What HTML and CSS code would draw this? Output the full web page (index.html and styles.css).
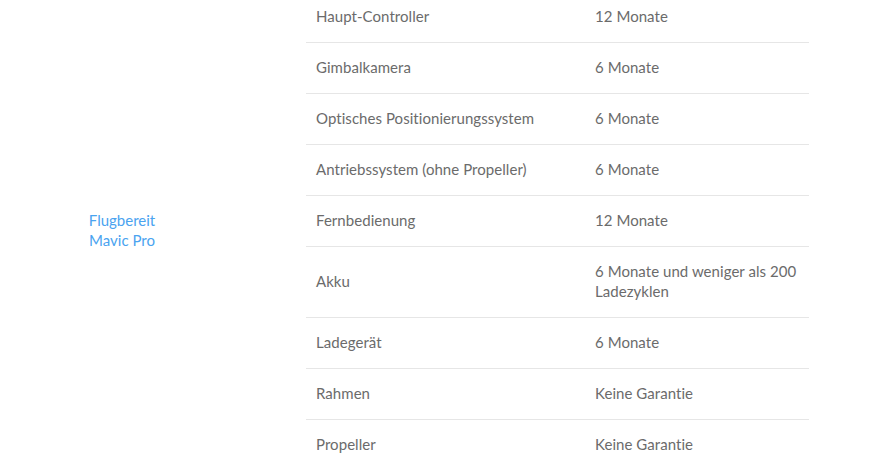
FILE: index.html
```html
<!DOCTYPE html>
<html lang="de">
<head>
<meta charset="utf-8">
<title>Garantie</title>
<link rel="stylesheet" href="styles.css">
</head>
<body>
<div class="warranty">
  <div class="product">Flugbereit<br>Mavic Pro</div>
  <div class="parts">
    <div class="row"><div class="part">Haupt-Controller</div><div class="term">12 Monate</div></div>
    <div class="row"><div class="part">Gimbalkamera</div><div class="term">6 Monate</div></div>
    <div class="row"><div class="part">Optisches Positionierungssystem</div><div class="term">6 Monate</div></div>
    <div class="row"><div class="part">Antriebssystem (ohne Propeller)</div><div class="term">6 Monate</div></div>
    <div class="row"><div class="part">Fernbedienung</div><div class="term">12 Monate</div></div>
    <div class="row"><div class="part">Akku</div><div class="term">6 Monate und weniger als 200 Ladezyklen</div></div>
    <div class="row"><div class="part">Ladegerät</div><div class="term">6 Monate</div></div>
    <div class="row"><div class="part">Rahmen</div><div class="term">Keine Garantie</div></div>
    <div class="row"><div class="part">Propeller</div><div class="term">Keine Garantie</div></div>
  </div>
</div>
</body>
</html>
```
FILE: styles.css
```css
html, body {
  margin: 0;
  padding: 0;
  background: #ffffff;
}
body {
  font-family: Lato, "Open Sans", "Liberation Sans", sans-serif;
  font-size: 15px;
  color: #6b6b6b;
  overflow: hidden;
}
.warranty {
  display: flex;
  margin-top: -8px;
}
.product {
  width: 244px;
  margin-right: 62px;
  padding-bottom: 4px;
  display: flex;
  align-items: center;
  justify-content: center;
  text-align: center;
  line-height: 20px;
  color: #4aa3f0;
}
.parts {
  width: 503px;
}
.row {
  display: grid;
  grid-template-columns: 279px 1fr;
  align-items: center;
  border-bottom: 1px solid #e6e6e6;
}
.part, .term {
  padding: 14px 10px 16px;
  line-height: 20px;
  letter-spacing: 0.05px;
}
```
